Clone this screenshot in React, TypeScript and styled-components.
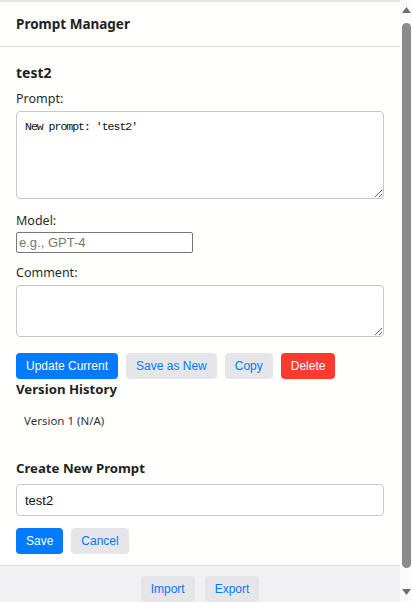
import React from "react";
import styled, { createGlobalStyle } from "styled-components";

const Global = createGlobalStyle`
  html, body { margin: 0; padding: 0; background: #fff; overflow: hidden; }
  body { font-family: "Noto Sans", "Open Sans", sans-serif; color: #222; }
  * { box-sizing: border-box; }
`;

const Shell = styled.div`
  height: 602px;
  display: flex;
  background: #fffffe;
`;

const Content = styled.div`
  flex: 1;
  min-width: 0;
  overflow: hidden;
  display: flex;
  flex-direction: column;
  border-top: 2px solid #e4e4e4;
`;

const Header = styled.header`
  flex: none;
  height: 45px;
  padding: 0 16px;
  display: flex;
  align-items: center;
  border-bottom: 1px solid #dcdcdc;
  font-weight: 700;
  font-size: 13.5px;
  color: #222;
`;

const Main = styled.main`
  flex: none;
  padding: 16px 16px 11px;
  display: flex;
  flex-direction: column;
`;

const Title = styled.h3`
  margin: 0;
  font-size: 14px;
  line-height: 20px;
  font-weight: 700;
  color: #1f1f1f;
`;

const Label = styled.label<{ $top: number }>`
  display: block;
  margin-top: ${(p) => p.$top}px;
  font-size: 12.5px;
  line-height: 17px;
  color: #2a2a2a;
`;

const TextArea = styled.textarea<{ $h: number; $mono?: boolean }>`
  display: block;
  width: 100%;
  height: ${(p) => p.$h}px;
  margin-top: 4px;
  padding: 8px;
  border: 1px solid #c8c8c8;
  border-radius: 4px;
  background: #fff;
  font-family: ${(p) => (p.$mono ? '"Liberation Mono", "Noto Sans CJK SC", monospace' : '"Liberation Sans", sans-serif')};
  font-size: 11.5px;
  letter-spacing: ${(p) => (p.$mono ? "-1px" : "0")};
  line-height: 14px;
  color: #111;
  resize: vertical;
  outline: none;
`;

const SmallInput = styled.input`
  display: block;
  width: 177px;
  height: 21px;
  margin-top: 3px;
  padding: 1px 2px;
  border: 1px solid #767676;
  border-radius: 2px;
  font-family: "Liberation Sans", Arial, sans-serif;
  font-size: 13px;
  color: #111;
  outline: none;
  &::placeholder { color: #777; }
`;

const WideInput = styled.input`
  display: block;
  width: 100%;
  height: 32px;
  margin-top: 6px;
  padding: 0 8px;
  border: 1px solid #c8c8c8;
  border-radius: 4px;
  font-family: "Liberation Sans", Arial, sans-serif;
  font-size: 13px;
  color: #111;
  outline: none;
`;

const Row = styled.div<{ $top: number; $gap?: number; $center?: boolean }>`
  display: flex;
  gap: ${(p) => p.$gap ?? 8}px;
  margin-top: ${(p) => p.$top}px;
  justify-content: ${(p) => (p.$center ? "center" : "flex-start")};
`;

type Variant = "primary" | "secondary" | "danger";

const Button = styled.button<{ $v: Variant }>`
  height: 26px;
  padding: 0 10px;
  border: none;
  border-radius: 4px;
  font-family: "Liberation Sans", Arial, sans-serif;
  font-size: 12px;
  cursor: pointer;
  background: ${(p) =>
    p.$v === "primary" ? "#007aff" : p.$v === "danger" ? "#ff3b30" : "#e5e5ea"};
  color: ${(p) => (p.$v === "secondary" ? "#007aff" : "#fff")};
`;

const SectionTitle = styled.h4<{ $top: number }>`
  margin: ${(p) => p.$top}px 0 0;
  font-size: 13.2px;
  line-height: 20px;
  font-weight: 700;
  color: #1f1f1f;
`;

const VersionList = styled.ul`
  list-style: none;
  margin: 0;
  padding: 13px 8px 0;
`;

const VersionItem = styled.li`
  font-size: 11.5px;
  line-height: 18px;
  color: #333;
`;

const Footer = styled.footer`
  flex: none;
  border-top: 1px solid #dedede;
  background: #f1f1f4;
  padding: 10px 0 22px;
`;

const Rail = styled.div`
  flex: none;
  width: 12px;
  height: 602px;
  background: #fbfbfb;
  display: flex;
  flex-direction: column;
  align-items: center;
`;

const Arrow = styled.div`
  flex: none;
  width: 12px;
  height: 20px;
  display: flex;
  align-items: center;
  justify-content: center;
  padding-left: 1px;
`;

const Thumb = styled.div`
  flex: 1 1 auto;
  width: 9px;
  margin: 3px 0 14px 1px;
  border-radius: 5px;
  background: #8b8b8b;
`;

const Tri = ({ down }: { down?: boolean }) => (
  <svg width="9" height="6" viewBox="0 0 9 6" style={{ display: "block", flex: "none" }}>
    <polygon points={down ? "0,0 9,0 4.5,6" : "0,6 9,6 4.5,0"} fill="#6f6f6f" />
  </svg>
);

export default function App() {
  return (
    <>
      <Global />
      <Shell>
        <Content>
          <Header>Prompt Manager</Header>
          <Main>
            <Title>test2</Title>
            <Label $top={7}>Prompt:</Label>
            <TextArea $h={88} $mono defaultValue={"New prompt: 'test2'"} />
            <Label $top={13}>Model:</Label>
            <SmallInput placeholder="e.g., GPT-4" />
            <Label $top={11}>Comment:</Label>
            <TextArea $h={52} />
            <Row $top={16}>
              <Button $v="primary">Update Current</Button>
              <Button $v="secondary">Save as New</Button>
              <Button $v="secondary">Copy</Button>
              <Button $v="danger">Delete</Button>
            </Row>
            <SectionTitle $top={0}>Version History</SectionTitle>
            <VersionList>
              <VersionItem>Version 1 (N/A)</VersionItem>
            </VersionList>
            <SectionTitle $top={28}>Create New Prompt</SectionTitle>
            <WideInput defaultValue="test2" />
            <Row $top={12}>
              <Button $v="primary">Save</Button>
              <Button $v="secondary">Cancel</Button>
            </Row>
          </Main>
          <Footer>
            <Row $top={0} $gap={10} $center>
              <Button $v="secondary">Import</Button>
              <Button $v="secondary">Export</Button>
            </Row>
          </Footer>
        </Content>
        <Rail>
          <Arrow>
            <Tri />
          </Arrow>
          <Thumb />
          <Arrow>
            <Tri down />
          </Arrow>
        </Rail>
      </Shell>
    </>
  );
}
